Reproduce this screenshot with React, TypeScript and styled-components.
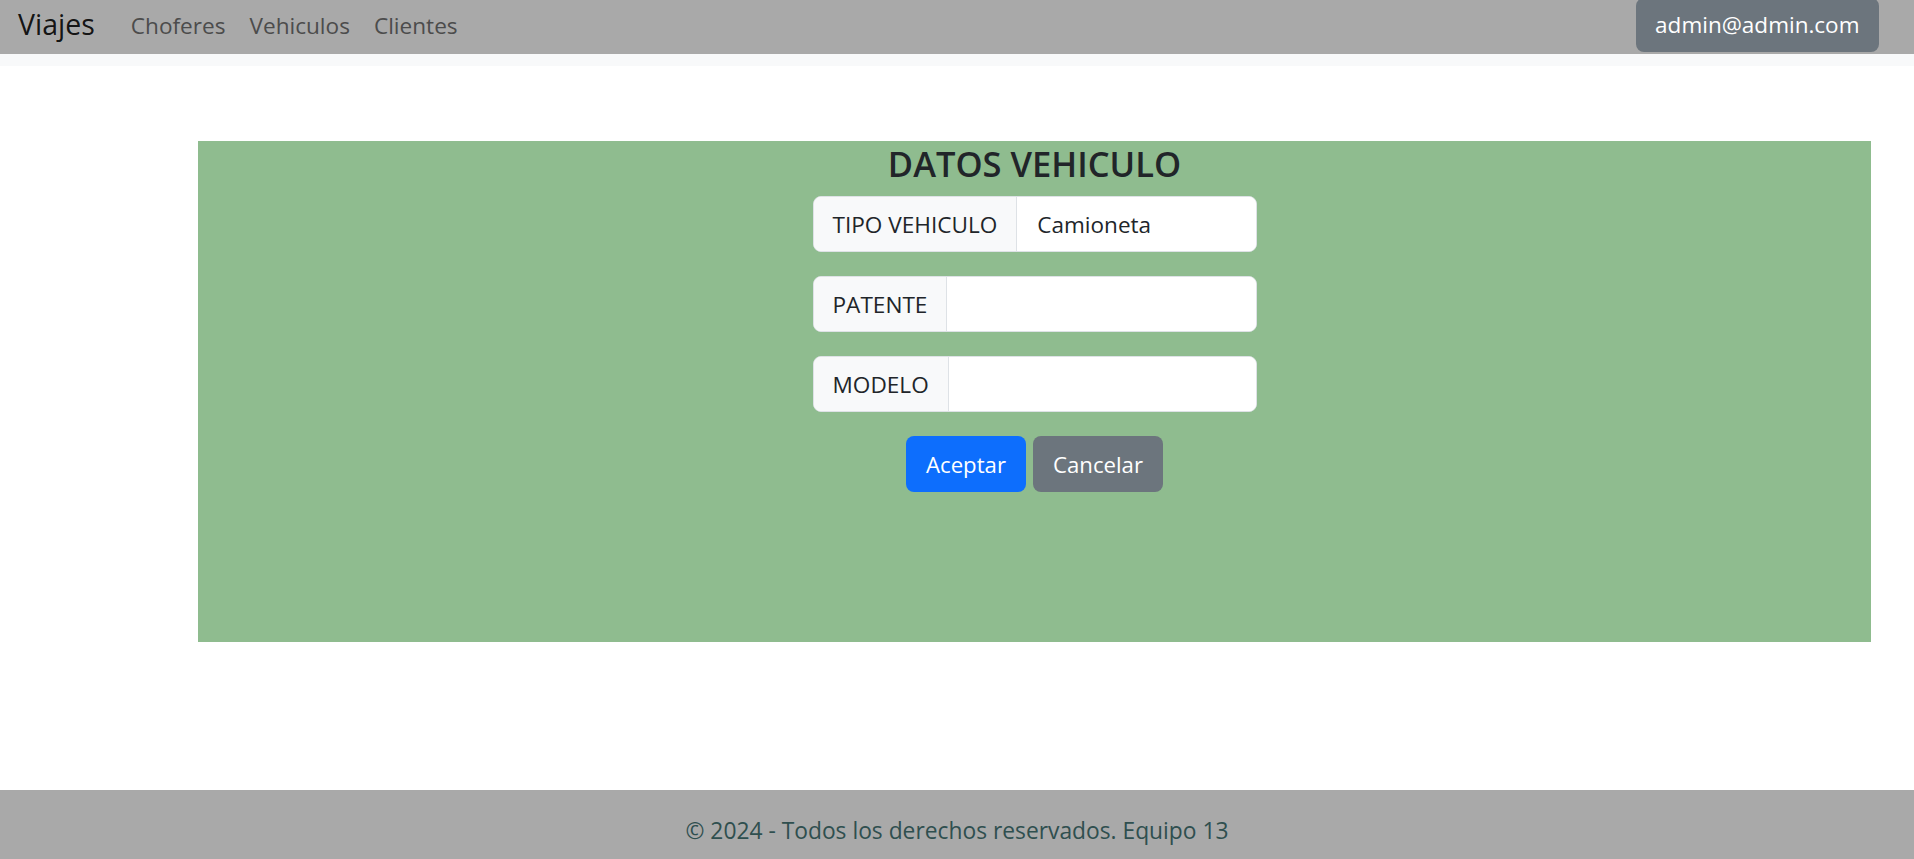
import React from "react";
import styled, { createGlobalStyle } from "styled-components";

const GlobalStyle = createGlobalStyle`
  * {
    box-sizing: border-box;
  }
  body {
    margin: 0;
    font-family: "Open Sans", "Noto Sans", sans-serif;
    color: #212529;
    background: #fff;
  }
`;

const Page = styled.div`
  min-height: 100vh;
  display: flex;
  flex-direction: column;
`;

const Navbar = styled.nav`
  height: 54px;
  background: #a9a9a9;
  display: flex;
  align-items: flex-start;
  padding: 0 35px 0 18px;
`;

const Brand = styled.a`
  font-size: 28.5px;
  line-height: 42px;
  margin-top: 3px;
  margin-right: 24px;
  color: rgba(0, 0, 0, 0.9);
  text-decoration: none;
`;

const NavLinks = styled.div`
  display: flex;
  margin-top: 9px;
`;

const NavLink = styled.a`
  font-size: 22.6px;
  line-height: 33px;
  padding: 0 12px;
  color: #4c4c4c;
  text-decoration: none;
  cursor: pointer;
`;

const UserButton = styled.button`
  margin-left: auto;
  margin-top: -2px;
  padding: 10px 19.5px;
  font-family: inherit;
  font-size: 22.5px;
  line-height: 34px;
  color: #fff;
  background: #6c757d;
  border: none;
  border-radius: 8px;
`;

const SubBar = styled.div`
  height: 12px;
  background: #f8f9fa;
`;

const Panel = styled.section`
  margin: 75px 43px 0 198px;
  height: 501px;
  background: #8fbc8f;
  display: flex;
  flex-direction: column;
  align-items: center;
  padding-top: 2px;
`;

const Title = styled.h3`
  margin: 0 0 11px;
  font-size: 34.5px;
  font-weight: 600;
  line-height: 42px;
  color: #212529;
`;

const Form = styled.form`
  width: 444px;
  display: flex;
  flex-direction: column;
  gap: 24px;
`;

const InputGroup = styled.div`
  display: flex;
  height: 56px;
  border: 1px solid #dee2e6;
  border-radius: 8px;
  overflow: hidden;
  background: #fff;
`;

const GroupLabel = styled.span`
  display: flex;
  align-items: center;
  padding: 0 19px 0 19px;
  background: #f8f9fa;
  border-right: 1px solid #dee2e6;
  font-size: 22.6px;
  color: #212529;
  white-space: nowrap;
`;

const GroupInput = styled.input`
  flex: 1;
  min-width: 0;
  border: none;
  outline: none;
  padding: 0 20px;
  font-family: inherit;
  font-size: 22.5px;
  color: #212529;
  background: #fff;
`;

const Actions = styled.div`
  display: flex;
  justify-content: center;
  gap: 7px;
  margin-top: 24px;
`;

const Button = styled.button<{ $variant: "primary" | "secondary" }>`
  height: 56px;
  padding: 0 20px;
  border: none;
  border-radius: 8px;
  font-family: inherit;
  font-size: 22.2px;
  color: #fff;
  background: ${(p) => (p.$variant === "primary" ? "#0d6efd" : "#6c757d")};
  cursor: pointer;
`;

const Footer = styled.footer`
  margin-top: auto;
  height: 69px;
  padding-top: 24px;
  background: #a9a9a9;
  text-align: center;
  font-size: 22.8px;
  line-height: 34px;
  color: #2f4f4f;
`;

const fields = [
  { label: "TIPO VEHICULO", value: "Camioneta" },
  { label: "PATENTE", value: "" },
  { label: "MODELO", value: "" },
];

const App: React.FC = () => {
  return (
    <Page>
      <GlobalStyle />
      <Navbar>
        <Brand>Viajes</Brand>
        <NavLinks>
          <NavLink>Choferes</NavLink>
          <NavLink>Vehiculos</NavLink>
          <NavLink>Clientes</NavLink>
        </NavLinks>
        <UserButton>admin@admin.com</UserButton>
      </Navbar>
      <SubBar />
      <Panel>
        <Title>DATOS VEHICULO</Title>
        <Form onSubmit={(e) => e.preventDefault()}>
          {fields.map((f) => (
            <InputGroup key={f.label}>
              <GroupLabel>{f.label}</GroupLabel>
              <GroupInput defaultValue={f.value} />
            </InputGroup>
          ))}
        </Form>
        <Actions>
          <Button $variant="primary">Aceptar</Button>
          <Button $variant="secondary">Cancelar</Button>
        </Actions>
      </Panel>
      <Footer>{"\u00a9 2024 - Todos los derechos reservados. Equipo 13"}</Footer>
    </Page>
  );
};

export default App;
